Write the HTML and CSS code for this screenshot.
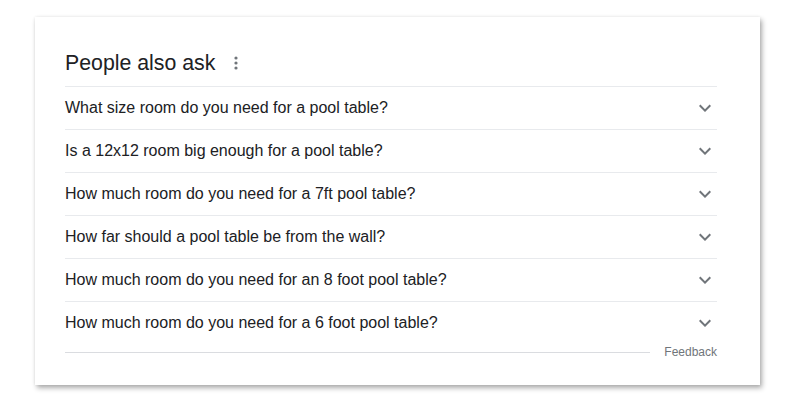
FILE: index.html
```html
<!DOCTYPE html>
<html>
<head>
<meta charset="utf-8">
<link rel="stylesheet" href="styles.css">
</head>
<body>
<div class="card">
  <div class="header">
    <h2 class="title">People also ask</h2>
    <svg class="dots" width="4" height="14" viewBox="0 0 4 14"><circle cx="2" cy="2" r="1.6"/><circle cx="2" cy="7" r="1.6"/><circle cx="2" cy="12" r="1.6"/></svg>
  </div>
  <div class="row"><span>What size room do you need for a pool table?</span><svg class="chev" viewBox="0 0 24 24"><path d="M7.41 8.59 12 13.17l4.59-4.58L18 10l-6 6-6-6z"/></svg></div>
  <div class="row"><span>Is a 12x12 room big enough for a pool table?</span><svg class="chev" viewBox="0 0 24 24"><path d="M7.41 8.59 12 13.17l4.59-4.58L18 10l-6 6-6-6z"/></svg></div>
  <div class="row"><span>How much room do you need for a 7ft pool table?</span><svg class="chev" viewBox="0 0 24 24"><path d="M7.41 8.59 12 13.17l4.59-4.58L18 10l-6 6-6-6z"/></svg></div>
  <div class="row"><span>How far should a pool table be from the wall?</span><svg class="chev" viewBox="0 0 24 24"><path d="M7.41 8.59 12 13.17l4.59-4.58L18 10l-6 6-6-6z"/></svg></div>
  <div class="row"><span>How much room do you need for an 8 foot pool table?</span><svg class="chev" viewBox="0 0 24 24"><path d="M7.41 8.59 12 13.17l4.59-4.58L18 10l-6 6-6-6z"/></svg></div>
  <div class="row last"><span>How much room do you need for a 6 foot pool table?</span><svg class="chev" viewBox="0 0 24 24"><path d="M7.41 8.59 12 13.17l4.59-4.58L18 10l-6 6-6-6z"/></svg></div>
  <div class="feedback-row">
    <div class="fline"></div>
    <span class="feedback">Feedback</span>
  </div>
</div>
</body>
</html>
```

FILE: styles.css
```css
html, body {
  margin: 0;
  padding: 0;
  background: #fff;
}
html {
  min-height: 100%;
}
body {
  min-height: 404px;
  box-sizing: border-box;
  padding: 17px 0 19px 35px;
  font-family: "Liberation Sans", Arial, sans-serif;
}
.card {
  width: 725px;
  height: 368px;
  box-sizing: border-box;
  padding: 0 43px 0 30px;
  background: #fff;
  box-shadow: 2px 3px 5px rgba(0,0,0,0.32), 0 0 3px rgba(0,0,0,0.08);
}
.header {
  display: flex;
  align-items: center;
  padding: 32px 0 9px;
  border-bottom: 1px solid #e8eaed;
}
.title {
  margin: 0;
  font-size: 21.3px;
  line-height: 28px;
  font-weight: 400;
  color: #202124;
}
.dots {
  margin-left: 19px;
  fill: #70757a;
}
.row {
  height: 42px;
  display: flex;
  align-items: center;
  justify-content: space-between;
  border-bottom: 1px solid #e8eaed;
  font-size: 16px;
  color: #202124;
}
.row.last {
  border-bottom: none;
}
.chev {
  width: 24px;
  height: 24px;
  fill: #70757a;
}
.feedback-row {
  display: flex;
  align-items: center;
  height: 16px;
}
.fline {
  flex: 1;
  height: 1px;
  background: #dadce0;
  margin-right: 14px;
}
.feedback {
  font-size: 12px;
  color: #70757a;
}
```
